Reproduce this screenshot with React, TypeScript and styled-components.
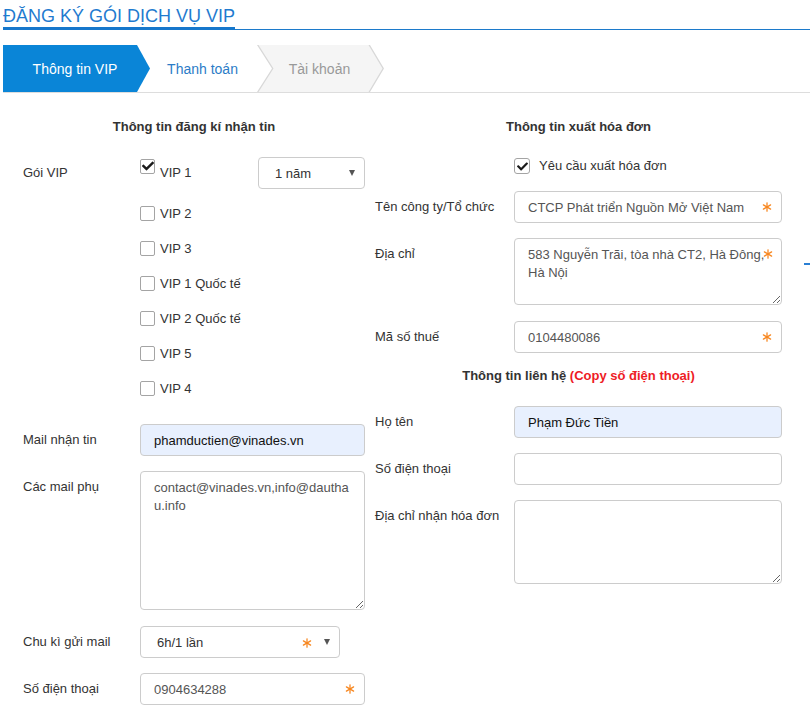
import React from "react";
import styled, { createGlobalStyle } from "styled-components";
import { FaCheck } from "react-icons/fa";

const GlobalStyle = createGlobalStyle`
  html, body { margin: 0; padding: 0; background: #fff; }
  body {
    font-family: "Liberation Sans", Arial, sans-serif;
    font-size: 13px;
    color: #333;
    overflow: hidden;
  }
  * { box-sizing: border-box; }
`;

const Page = styled.div`
  width: 810px;
  padding-left: 3px;
`;

const TitleBar = styled.div`
  padding-top: 5px;
  border-bottom: 1px solid #1c7acb;
`;

const TitleText = styled.h1`
  display: inline-block;
  margin: 0 0 -1px 0;
  font-size: 18px;
  font-weight: normal;
  line-height: 22px;
  color: #1f7bcf;
  border-bottom: 3px solid #1677cc;
`;

const StepBar = styled.div`
  display: flex;
  margin-top: 15px;
  height: 48px;
  border-bottom: 1px solid #ddd;
`;

const ActiveStep = styled.div`
  width: 147px;
  display: flex;
  align-items: center;
  justify-content: center;
  padding-right: 3px;
  background: #0a85d7;
  color: #fff;
  font-size: 14px;
  clip-path: polygon(0 0, calc(100% - 13px) 0, 100% 50%, calc(100% - 13px) 100%, 0 100%);
`;

const NextStep = styled.div`
  width: 135px;
  margin-left: -13px;
  display: flex;
  align-items: center;
  justify-content: center;
  padding-right: 4px;
  color: #2b7cc7;
  font-size: 14px;
`;

const DisabledStep = styled.div`
  position: relative;
  width: 127px;
  margin-left: -15px;
  display: flex;
  align-items: center;
  justify-content: center;
  padding-right: 2px;
  color: #999;
  font-size: 14px;
  background: #d8d8d8;
  clip-path: polygon(0 0, calc(100% - 14px) 0, 100% 50%, calc(100% - 14px) 100%, 0 100%, 15px 50%);
  &::before {
    content: "";
    position: absolute;
    inset: 0;
    background: #f5f5f5;
    clip-path: polygon(1.5px 0, calc(100% - 15.5px) 0, calc(100% - 1.5px) 50%, calc(100% - 15.5px) 100%, 1.5px 100%, 16.5px 50%);
  }
`;

const StepLabel = styled.span`
  position: relative;
`;

const Form = styled.div`
  position: relative;
  display: grid;
  grid-template-columns: 342px 407px;
  column-gap: 10px;
  padding-left: 20px;
  margin-top: 25px;
  align-items: start;
`;

const Column = styled.div`
  display: flex;
  flex-direction: column;
`;

const SectionHeading = styled.div<{ $mt?: number }>`
  font-weight: bold;
  text-align: center;
  line-height: 18px;
  margin-top: ${(p) => p.$mt ?? 0}px;
  margin-bottom: 21px;
  color: #333;
`;

const Highlight = styled.span`
  color: #ee1c25;
`;

const Row = styled.div<{ $label: number; $mb?: number }>`
  display: grid;
  grid-template-columns: ${(p) => p.$label}px 1fr;
  margin-bottom: ${(p) => p.$mb ?? 15}px;
`;

const Label = styled.div`
  padding-top: 7px;
  line-height: 18px;
  color: #333;
`;

const CheckList = styled.div`
  display: flex;
  flex-direction: column;
`;

const FirstCheckRow = styled.div`
  display: flex;
  align-items: center;
  justify-content: space-between;
  height: 32px;
  margin-bottom: 7px;
`;

const CheckItem = styled.label<{ $h?: number; $gap?: number }>`
  display: flex;
  align-items: center;
  gap: ${(p) => p.$gap ?? 5}px;
  height: ${(p) => p.$h ?? 35}px;
  line-height: 18px;
  color: #333;
`;

const Box = styled.span<{ $size?: number; $raised?: boolean; $round?: number }>`
  display: inline-flex;
  align-items: center;
  justify-content: center;
  width: ${(p) => p.$size ?? 15}px;
  height: ${(p) => p.$size ?? 15}px;
  border: 1px solid #a4a4a4;
  border-radius: ${(p) => p.$round ?? 2}px;
  background: #fff;
  color: #1a1a1a;
  margin-bottom: ${(p) => (p.$raised ? 14 : 0)}px;
  flex: none;
`;

const FakeSelect = styled.div<{ $w: number }>`
  display: flex;
  align-items: center;
  width: ${(p) => p.$w}px;
  height: 32px;
  padding: 0 9px 0 16px;
  border: 1px solid #ccc;
  border-radius: 4px;
  background: #fff;
  color: #333;
`;

const SelectText = styled.span`
  flex: 1;
`;

const Caret = styled.span`
  width: 0;
  height: 0;
  border-left: 3px solid transparent;
  border-right: 3px solid transparent;
  border-top: 6px solid #555;
  margin-left: 12px;
`;

const Field = styled.div`
  position: relative;
`;

const TextInput = styled.input<{ $filled?: boolean }>`
  display: block;
  width: 100%;
  height: 32px;
  padding: 0 24px 0 13px;
  border: 1px solid #ccc;
  border-radius: 4px;
  font-family: "Liberation Sans", Arial, sans-serif;
  font-size: 13px;
  color: ${(p) => (p.$filled ? "#111" : "#555")};
  background: ${(p) => (p.$filled ? "#e8f0fe" : "#fff")};
  outline: none;
`;

const TextArea = styled.textarea<{ $h: number }>`
  display: block;
  width: 100%;
  height: ${(p) => p.$h}px;
  padding: 7px 13px;
  border: 1px solid #ccc;
  border-radius: 4px;
  font-family: "Liberation Sans", Arial, sans-serif;
  font-size: 13px;
  line-height: 18px;
  color: #555;
  background: #fff;
  outline: none;
  resize: vertical;
`;

const AsteriskMark = styled.span<{ $right?: number }>`
  position: absolute;
  right: ${(p) => p.$right ?? 10}px;
  top: 11px;
  width: 10px;
  height: 10px;
  display: flex;
`;

const InlineAsterisk = styled.span`
  display: flex;
  width: 10px;
  height: 10px;
  margin-top: 2px;
`;

const EdgeMark = styled.span`
  position: absolute;
  right: 0;
  top: 145px;
  width: 6px;
  height: 1.5px;
  background: #2a7fd4;
`;

const Star = () => (
  <svg width="10" height="10" viewBox="0 0 10 10">
    <g stroke="#f7861e" strokeWidth="1.25" strokeLinecap="round">
      <line x1="5" y1="0.8" x2="5" y2="9.2" />
      <line x1="1.4" y1="2.9" x2="8.6" y2="7.1" />
      <line x1="1.4" y1="7.1" x2="8.6" y2="2.9" />
    </g>
  </svg>
);

const vipRest = ["VIP 2", "VIP 3", "VIP 1 Quốc tế", "VIP 2 Quốc tế", "VIP 5", "VIP 4"];

export default function App() {
  return (
    <Page>
      <GlobalStyle />
      <TitleBar>
        <TitleText>ĐĂNG KÝ GÓI DỊCH VỤ VIP</TitleText>
      </TitleBar>

      <StepBar>
        <ActiveStep>Thông tin VIP</ActiveStep>
        <NextStep>Thanh toán</NextStep>
        <DisabledStep>
          <StepLabel>Tài khoản</StepLabel>
        </DisabledStep>
      </StepBar>

      <Form>
        <Column>
          <SectionHeading>Thông tin đăng kí nhận tin</SectionHeading>

          <Row $label={117} $mb={18}>
            <Label>Gói VIP</Label>
            <CheckList>
              <FirstCheckRow>
                <CheckItem $h={32}>
                  <Box $raised>
                    <FaCheck size={12} />
                  </Box>
                  VIP 1
                </CheckItem>
                <FakeSelect $w={107}>
                  <SelectText>1 năm</SelectText>
                  <Caret />
                </FakeSelect>
              </FirstCheckRow>
              {vipRest.map((v) => (
                <CheckItem key={v}>
                  <Box />
                  {v}
                </CheckItem>
              ))}
            </CheckList>
          </Row>

          <Row $label={117}>
            <Label>Mail nhận tin</Label>
            <Field>
              <TextInput $filled readOnly value="phamductien@vinades.vn" />
            </Field>
          </Row>

          <Row $label={117} $mb={16}>
            <Label>Các mail phụ</Label>
            <Field>
              <TextArea $h={139} readOnly value="contact@vinades.vn,info@dauthau.info" />
            </Field>
          </Row>

          <Row $label={117}>
            <Label>Chu kì gửi mail</Label>
            <FakeSelect $w={200}>
              <SelectText>6h/1 lần</SelectText>
              <InlineAsterisk>
                <Star />
              </InlineAsterisk>
              <Caret />
            </FakeSelect>
          </Row>

          <Row $label={117} $mb={0}>
            <Label>Số điện thoại</Label>
            <Field>
              <TextInput readOnly value="0904634288" />
              <AsteriskMark>
                <Star />
              </AsteriskMark>
            </Field>
          </Row>
        </Column>

        <Column>
          <SectionHeading>Thông tin xuất hóa đơn</SectionHeading>

          <Row $label={139} $mb={16}>
            <span />
            <CheckItem $h={18} $gap={9}>
              <Box $size={16} $round={3}>
                <FaCheck size={11} />
              </Box>
              Yêu cầu xuất hóa đơn
            </CheckItem>
          </Row>

          <Row $label={139}>
            <Label>Tên công ty/Tổ chức</Label>
            <Field>
              <TextInput readOnly value="CTCP Phát triển Nguồn Mở Việt Nam" />
              <AsteriskMark>
                <Star />
              </AsteriskMark>
            </Field>
          </Row>

          <Row $label={139} $mb={16}>
            <Label>Địa chỉ</Label>
            <Field>
              <TextArea $h={67} readOnly value="583 Nguyễn Trãi, tòa nhà CT2, Hà Đông, Hà Nội" />
              <AsteriskMark $right={9}>
                <Star />
              </AsteriskMark>
            </Field>
          </Row>

          <Row $label={139} $mb={0}>
            <Label>Mã số thuế</Label>
            <Field>
              <TextInput readOnly value="0104480086" />
              <AsteriskMark>
                <Star />
              </AsteriskMark>
            </Field>
          </Row>

          <SectionHeading $mt={14}>
            Thông tin liên hệ <Highlight>(Copy số điện thoại)</Highlight>
          </SectionHeading>

          <Row $label={139}>
            <Label>Họ tên</Label>
            <Field>
              <TextInput $filled readOnly value="Phạm Đức Tiền" />
            </Field>
          </Row>

          <Row $label={139}>
            <Label>Số điện thoại</Label>
            <Field>
              <TextInput readOnly value="" />
            </Field>
          </Row>

          <Row $label={139} $mb={0}>
            <Label>Địa chỉ nhận hóa đơn</Label>
            <Field>
              <TextArea $h={84} readOnly value="" />
            </Field>
          </Row>
        </Column>
        <EdgeMark />
      </Form>
    </Page>
  );
}
